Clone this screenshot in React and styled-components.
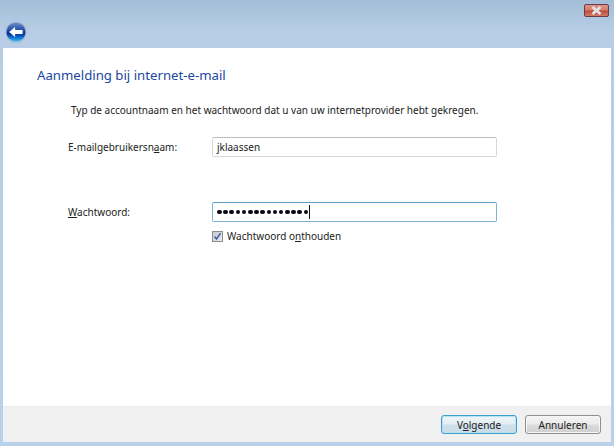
import React from 'react'
import styled, { createGlobalStyle } from 'styled-components'

const GlobalStyle = createGlobalStyle`
    html, body {
        margin: 0;
        padding: 0;
    }
    body {
        font-family: 'Noto Sans', 'Open Sans', sans-serif;
    }
`

const Frame = styled.div`
    width: 614px;
    height: 446px;
    box-sizing: border-box;
    padding: 0 3px 4px 3px;
    display: flex;
    flex-direction: column;
    background: linear-gradient(180deg, #a3bcd7 0px, #b6cde5 30px, #b9d1ea 100%);
`

const Header = styled.div`
    height: 48px;
    flex-shrink: 0;
    display: flex;
    flex-direction: column;
`

const CloseRow = styled.div`
    display: flex;
    justify-content: flex-end;
    padding: 4px 2px 0 0;
`

const CloseButton = styled.div`
    width: 25px;
    height: 13px;
    box-sizing: border-box;
    display: flex;
    align-items: center;
    justify-content: center;
    border: 1px solid #6e3a48;
    border-radius: 2px;
    background: linear-gradient(180deg, #dd9486 0%, #d47d6e 45%, #bb4a38 55%, #d57a68 100%);
`

const BackRow = styled.div`
    padding: 4px 0 0 2px;
    display: flex;
`

const Page = styled.div`
    flex: 1;
    display: flex;
    flex-direction: column;
    background: #fff;
    min-height: 0;
`

const Main = styled.div`
    flex: 1;
    padding: 17px 0 0 34px;
`

const Title = styled.h1`
    margin: 0;
    font-size: 13.2px;
    line-height: 20px;
    font-weight: 400;
    color: #1c469f;
`

const Intro = styled.p`
    margin: 17px 0 0 34px;
    font-size: 10px;
    line-height: 16px;
    color: #222;
`

const Form = styled.div`
    margin: 19px 0 0 31px;
    display: grid;
    grid-template-columns: 144px 285px;
    grid-template-rows: 20px 20px;
    row-gap: 45px;
    align-items: center;
`

const Label = styled.label`
    font-size: 10px;
    line-height: 16px;
    color: #222;
`

const Field = styled.div`
    height: 20px;
    box-sizing: border-box;
    display: flex;
    align-items: center;
    padding-left: 4px;
    border: 1px solid ${(props) => (props.$focus ? '#7fb4d8' : '#d3d8de')};
    border-top-color: ${(props) => (props.$focus ? '#5f9cc6' : '#b9bec4')};
    border-radius: 2px;
    font-size: 10px;
    color: #222;
`

const Dots = styled.span`
    display: flex;
    gap: 1.6px;
`

const Dot = styled.i`
    width: 4.6px;
    height: 4.6px;
    border-radius: 50%;
    background: #0a0a14;
`

const Caret = styled.span`
    width: 1px;
    height: 14px;
    margin-left: 1px;
    background: #111;
`

const CheckRow = styled.div`
    margin: 7px 0 0 175px;
    display: flex;
    align-items: center;
    gap: 4px;
    font-size: 10px;
    line-height: 14px;
    color: #222;
`

const CheckBox = styled.div`
    width: 11px;
    height: 11px;
    box-sizing: border-box;
    display: flex;
    align-items: center;
    justify-content: center;
    border: 1px solid #8e8f8f;
    background: linear-gradient(135deg, #c5c9d6, #e8e9ee);
`

const Footer = styled.div`
    height: 36px;
    flex-shrink: 0;
    box-sizing: border-box;
    display: flex;
    align-items: center;
    justify-content: flex-end;
    gap: 8px;
    padding: 0 10px 0 0;
    background: #f0f0f0;
    border-top: 1px solid #ececec;
`

const Button = styled.div`
    width: 76px;
    height: 19px;
    box-sizing: border-box;
    display: flex;
    align-items: center;
    justify-content: center;
    border: 1px solid ${(props) => (props.$primary ? '#3c9ec9' : '#8e8f8f')};
    border-radius: 3px;
    box-shadow: inset 0 0 0 1px ${(props) => (props.$primary ? '#b5e4f5' : '#f6f6f6')};
    background: linear-gradient(180deg, ${(props) => (props.$primary ? '#eef5f9 0%, #e3eef4 48%, #cfe0ea 52%, #cbdde8 100%' : '#f4f4f4 0%, #ebebeb 48%, #dcdcdc 52%, #cfcfcf 100%')});
    font-size: 10px;
    color: #222;
`

const BackIcon = () => (
    <svg width="22" height="22" viewBox="0 0 24 24">
        <defs>
            <linearGradient id="backBody" x1="0" y1="0" x2="0" y2="1">
                <stop offset="0" stopColor="#6f8fc8" />
                <stop offset="0.42" stopColor="#1f4aa8" />
                <stop offset="0.58" stopColor="#0a2f96" />
                <stop offset="0.78" stopColor="#0f6fd0" />
                <stop offset="1" stopColor="#2fc4f4" />
            </linearGradient>
        </defs>
        <circle cx="12" cy="12" r="11.8" fill="#a9bcd4" />
        <circle cx="12" cy="12" r="10.4" fill="url(#backBody)" />
        <path d="M4.5 12 L11 6.5 V9.8 H19.2 V14.2 H11 V17.5 Z" fill="#fff" />
    </svg>
)

const CloseIcon = () => (
    <svg width="11" height="9" viewBox="0 0 11 9">
        <path d="M1.5 1 L9.5 8 M9.5 1 L1.5 8" stroke="#e2e2e8" strokeWidth="2.8" />
    </svg>
)

const CheckIcon = () => (
    <svg width="9" height="9" viewBox="0 0 9 9">
        <path d="M1.5 4.5 L3.6 7 L7.5 1.2" fill="none" stroke="#3d5f9e" strokeWidth="1.5" />
    </svg>
)

const App = () => {
    return (
        <Frame>
            <GlobalStyle />
            <Header>
                <CloseRow>
                    <CloseButton>
                        <CloseIcon />
                    </CloseButton>
                </CloseRow>
                <BackRow>
                    <BackIcon />
                </BackRow>
            </Header>
            <Page>
                <Main>
                    <Title>Aanmelding bij internet-e-mail</Title>
                    <Intro>
                        Typ de accountnaam en het wachtwoord dat u van uw internetprovider hebt gekregen.
                    </Intro>
                    <Form>
                        <Label>
                            E-mailgebruikersn<u>a</u>am:
                        </Label>
                        <Field>jklaassen</Field>
                        <Label>
                            <u>W</u>achtwoord:
                        </Label>
                        <Field $focus>
                            <Dots>
                                {Array.from({ length: 15 }).map((_, i) => (
                                    <Dot key={i} />
                                ))}
                            </Dots>
                            <Caret />
                        </Field>
                    </Form>
                    <CheckRow>
                        <CheckBox>
                            <CheckIcon />
                        </CheckBox>
                        <span>
                            Wachtwoord o<u>n</u>thouden
                        </span>
                    </CheckRow>
                </Main>
                <Footer>
                    <Button $primary>
                        <span>
                            V<u>o</u>lgende
                        </span>
                    </Button>
                    <Button>Annuleren</Button>
                </Footer>
            </Page>
        </Frame>
    )
}

export default App
